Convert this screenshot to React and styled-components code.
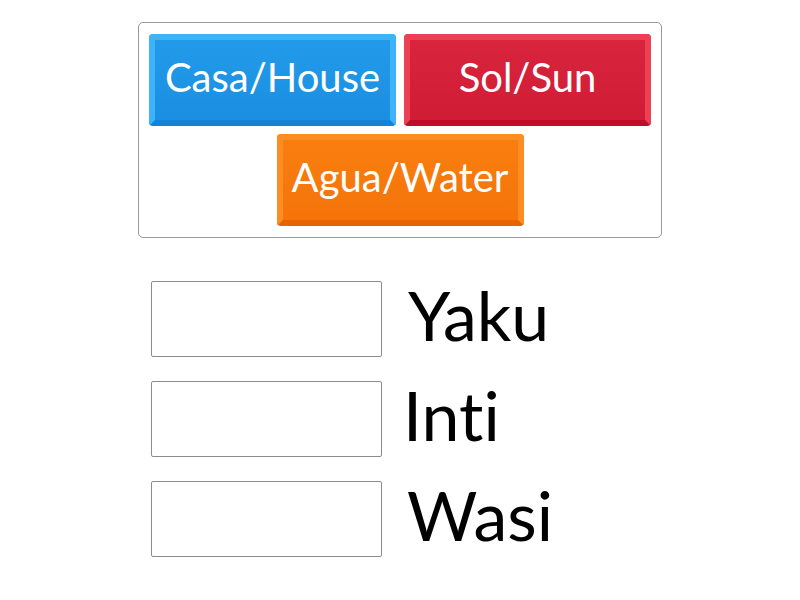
import React from "react";
import styled, { createGlobalStyle } from "styled-components";

const Global = createGlobalStyle`
  html, body { margin: 0; padding: 0; background: #fff; }
  body { font-family: Lato, "Open Sans", sans-serif; font-variant-ligatures: none; }
`;

const Page = styled.div`
  width: 800px;
  height: 600px;
  padding-top: 22px;
  box-sizing: border-box;
  display: flex;
  flex-direction: column;
  align-items: center;
`;

const Tray = styled.div`
  width: 524px;
  height: 216px;
  box-sizing: border-box;
  border: 1px solid #9a9a9a;
  border-radius: 5px;
  padding: 11px 10px 10px 10px;
  display: flex;
  flex-wrap: wrap;
  justify-content: center;
  align-content: flex-start;
  gap: 8px;
`;

const palettes = {
  blue: { top: "#3cb4f7", mid: "#229ae9", low: "#1b8fe2", bottom: "#1482d5" },
  red: { top: "#ee4054", mid: "#d9243d", low: "#d01c35", bottom: "#c00d29" },
  orange: { top: "#fc8d22", mid: "#f97e0f", low: "#f47409", bottom: "#e66300" },
};

const Tile = styled.div`
  width: 247px;
  height: 92px;
  box-sizing: border-box;
  border-radius: 4px;
  border-style: solid;
  border-width: 6px;
  border-color: ${(p) => palettes[p.$c].top} ${(p) => palettes[p.$c].top}
    ${(p) => palettes[p.$c].bottom} ${(p) => palettes[p.$c].top};
  background: linear-gradient(
    ${(p) => palettes[p.$c].mid},
    ${(p) => palettes[p.$c].low}
  );
  display: flex;
  align-items: center;
  justify-content: center;
  color: #fff;
  font-size: 40px;
  line-height: 1;
  white-space: nowrap;
  padding-bottom: 6px;
`;

const Rows = styled.div`
  width: 524px;
  margin-top: 43px;
  padding-left: 13px;
  box-sizing: border-box;
  display: flex;
  flex-direction: column;
  gap: 24px;
`;

const Row = styled.div`
  display: flex;
  align-items: center;
  height: 76px;
  gap: ${(p) => p.$gap}px;
`;

const Slot = styled.div`
  width: 231px;
  height: 76px;
  box-sizing: border-box;
  border: 1px solid #8c8c8c;
  border-radius: 2px;
  flex: none;
`;

const Word = styled.div`
  font-size: 68px;
  line-height: 76px;
  color: #000;
  margin-top: -8px;
`;

const tiles = [
  { c: "blue", t: "Casa/House" },
  { c: "red", t: "Sol/Sun" },
  { c: "orange", t: "Agua/Water" },
];

const words = [
  { t: "Yaku", g: 26 },
  { t: "Inti", g: 21 },
  { t: "Wasi", g: 25 },
];

export default function App() {
  return (
    <>
      <Global />
      <Page>
        <Tray>
          {tiles.map((x) => (
            <Tile key={x.t} $c={x.c}>
              {x.t}
            </Tile>
          ))}
        </Tray>
        <Rows>
          {words.map((w) => (
            <Row key={w.t} $gap={w.g}>
              <Slot />
              <Word>{w.t}</Word>
            </Row>
          ))}
        </Rows>
      </Page>
    </>
  );
}
